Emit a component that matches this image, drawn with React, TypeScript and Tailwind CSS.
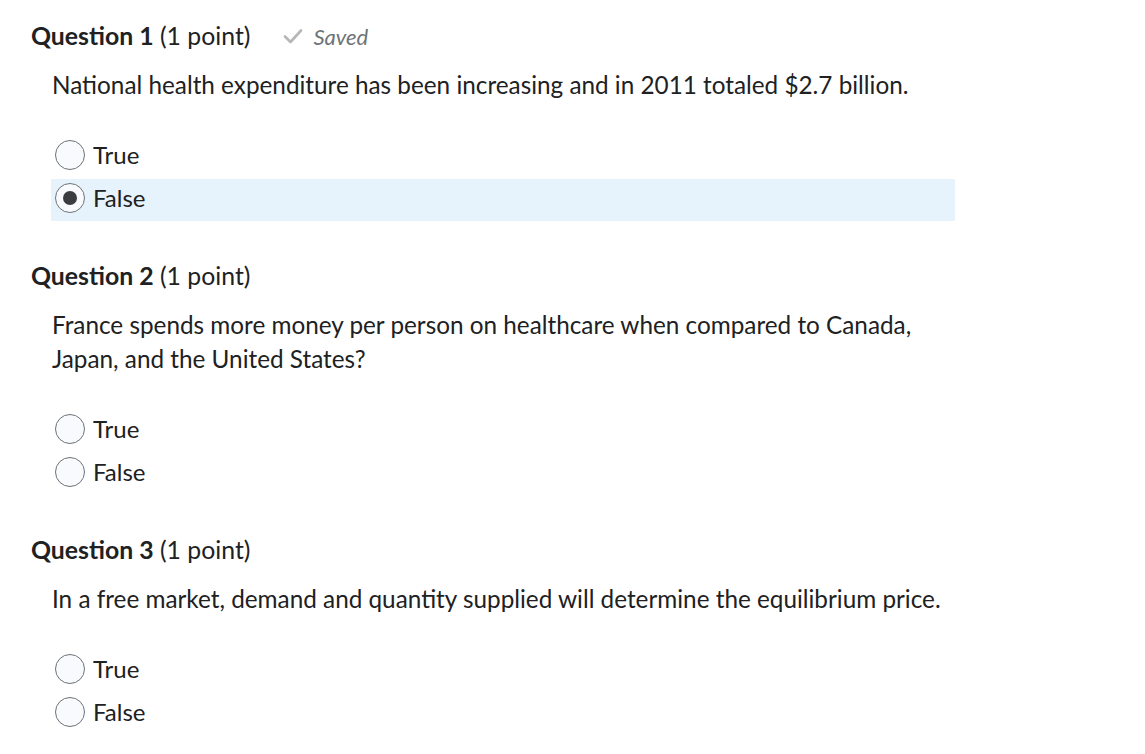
import React from "react";

type Q = { n: number; text: string; selected?: number; saved?: boolean };

const questions: Q[] = [
  { n: 1, text: "National health expenditure has been increasing and in 2011 totaled $2.7 billion.", selected: 1, saved: true },
  { n: 2, text: "France spends more money per person on healthcare when compared to Canada, Japan, and the United States?" },
  { n: 3, text: "In a free market, demand and quantity supplied will determine the equilibrium price." },
];

function Radio({ checked }: { checked: boolean }) {
  return (
    <span className="flex h-[30px] w-[30px] shrink-0 items-center justify-center rounded-full border border-[#6e7376] bg-[#f8fafd]">
      {checked && <span className="h-[14px] w-[14px] rounded-full bg-[#3a3d40]" />}
    </span>
  );
}

export default function App() {
  return (
    <div className="min-h-screen bg-white pl-[31px] pt-[21px] text-[#202122]" style={{ fontFamily: "Lato, 'Noto Sans', sans-serif" }}>
      {questions.map((q, i) => (
        <div key={q.n} className={i > 0 ? "mt-[40px]" : ""}>
          <div className="flex items-center h-[30px] text-[24.8px] whitespace-pre">
            <span className="font-bold">Question {q.n}</span>
            <span> (1 point)</span>
            {q.saved && (
              <span className="ml-[33px] flex items-center text-[#6e7376]">
                <svg width="20" height="16" viewBox="0 0 20 16" className="mr-[10px]">
                  <path d="M2 8.5 L7.5 14 L18 2.5" fill="none" stroke="#b4b6b8" strokeWidth="2.6" strokeLinecap="round" strokeLinejoin="round" />
                </svg>
                <span className="italic text-[22px]">Saved</span>
              </span>
            )}
          </div>
          <div className="ml-[21px] mt-[17px] max-w-[904px] text-[24.3px] leading-[34px]">{q.text}</div>
          <div className="ml-[20px] mt-[34px] flex w-[904px] flex-col gap-[1px]">
            {["True", "False"].map((opt, j) => {
              const checked = q.selected === j;
              return (
                <label
                  key={opt}
                  className={`flex h-[42px] items-center gap-[8px] pl-[4px] pb-[4px] ${checked ? "bg-[#e6f2fc]" : ""}`}
                >
                  <Radio checked={checked} />
                  <span className="text-[24px]">{opt}</span>
                </label>
              );
            })}
          </div>
        </div>
      ))}
    </div>
  );
}
